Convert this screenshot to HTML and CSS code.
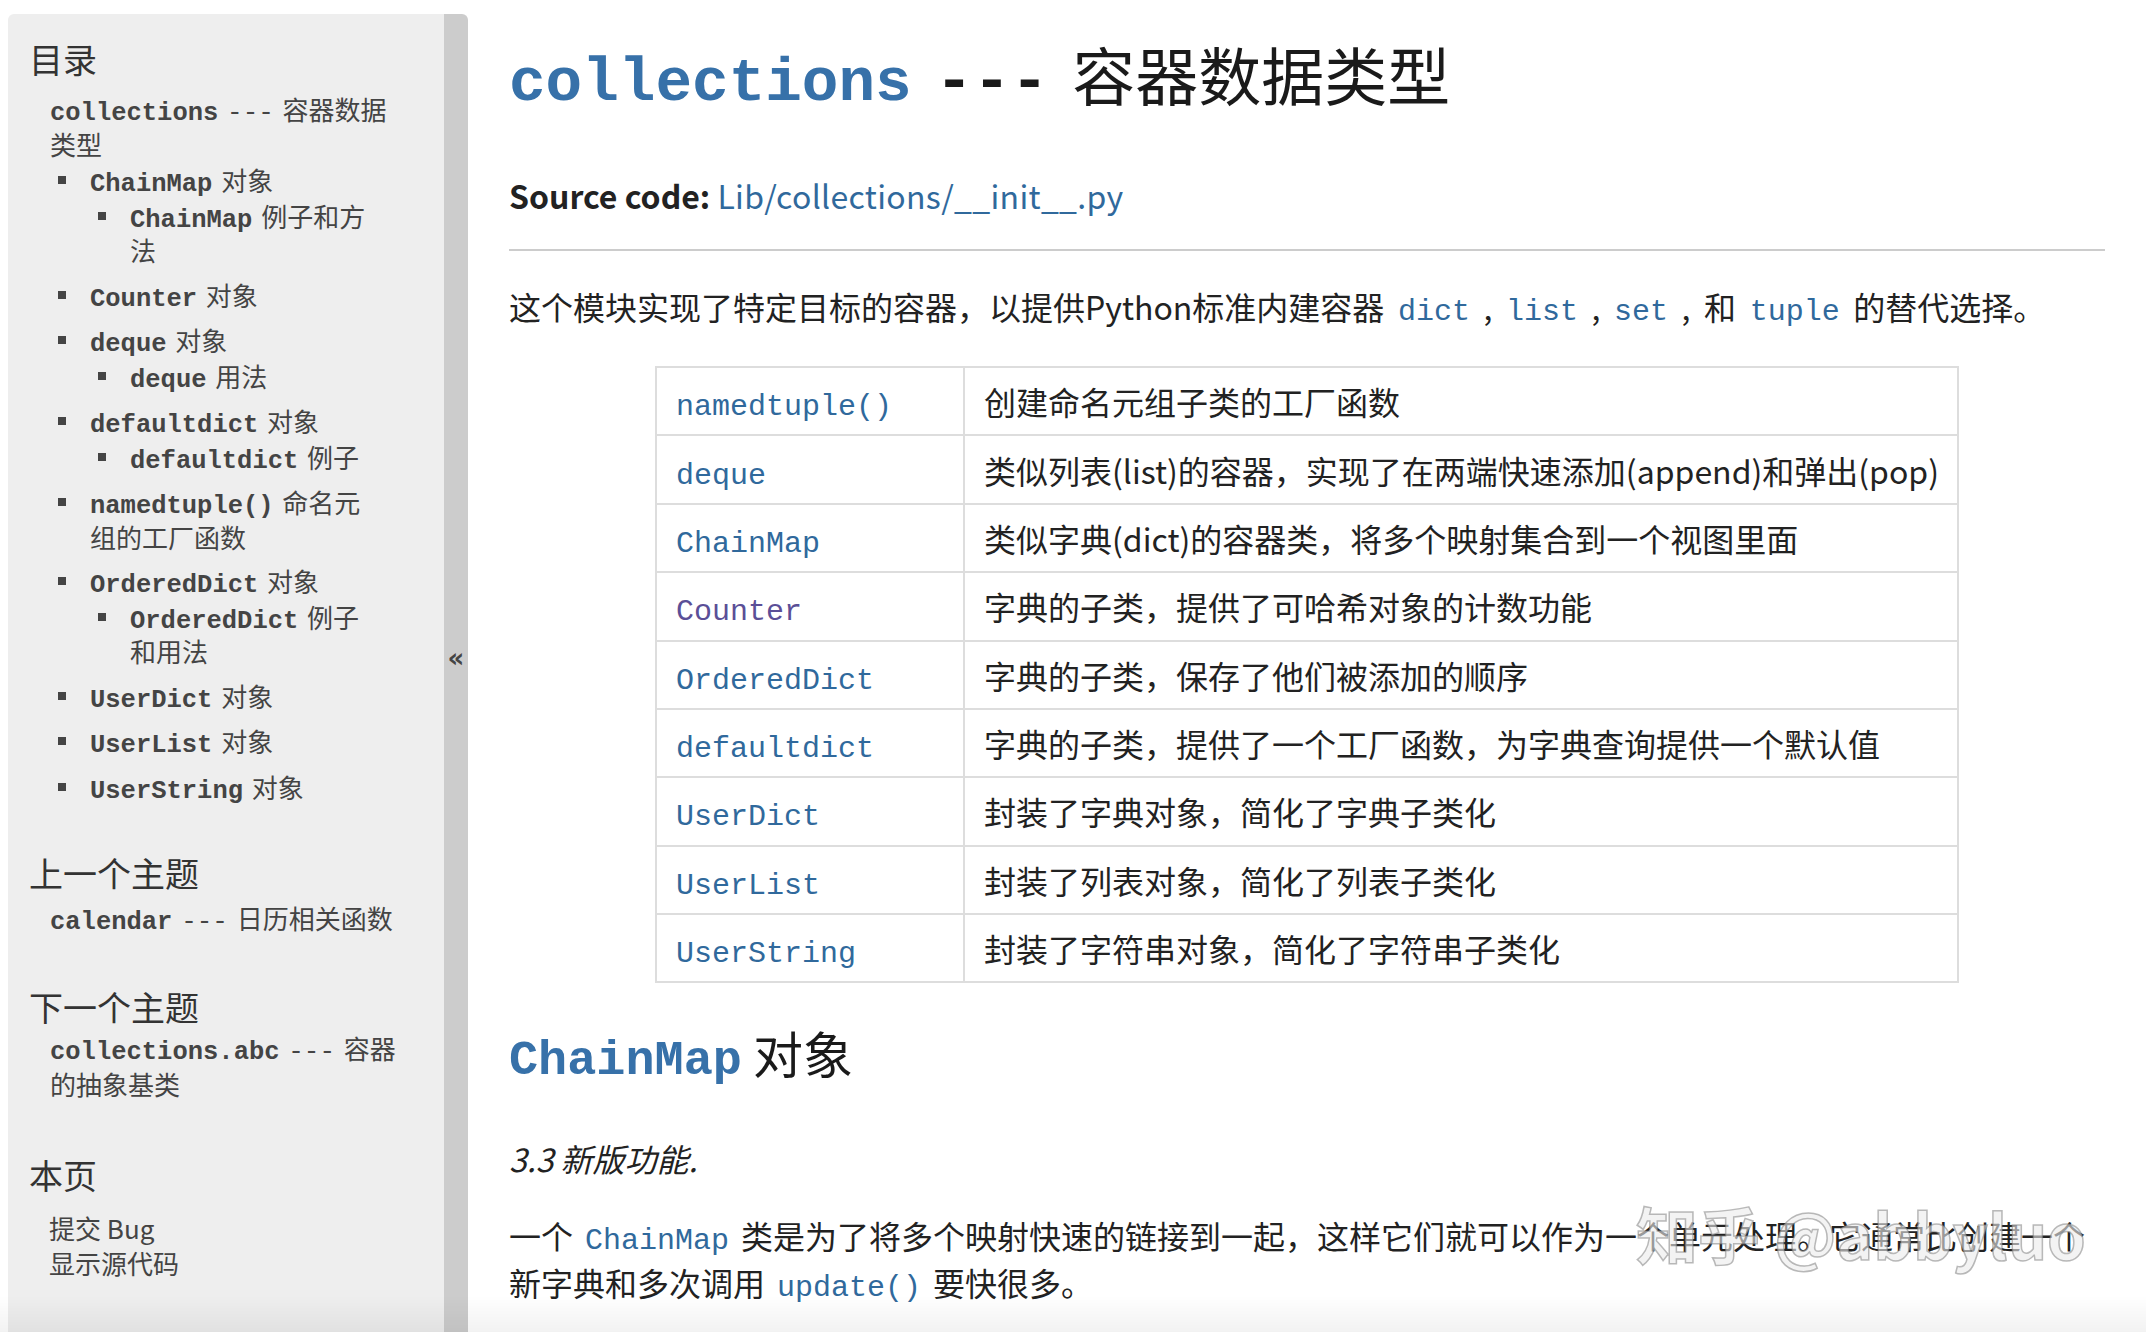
FILE: index.html
```html
<!DOCTYPE html>
<html lang="zh-CN">
<head>
<meta charset="utf-8">
<title>collections --- 容器数据类型</title>
<link rel="stylesheet" href="styles.css">
</head>
<body>
<div class="page">
  <aside class="sidebar">
    <div class="side-body">
      <h3 class="side-h toc-h">目录</h3>
      <ul class="toc">
        <li class="root"><a><code>collections</code> <span class="dash">---</span> 容器数据类型</a>
          <ul class="l1">
            <li class="first"><a><code>ChainMap</code> 对象</a>
              <ul class="l2"><li><a><code>ChainMap</code> 例子和方法</a></li></ul>
            </li>
            <li><a><code>Counter</code> 对象</a></li>
            <li><a><code>deque</code> 对象</a>
              <ul class="l2"><li><a><code>deque</code> 用法</a></li></ul>
            </li>
            <li><a><code>defaultdict</code> 对象</a>
              <ul class="l2"><li><a><code>defaultdict</code> 例子</a></li></ul>
            </li>
            <li><a><code>namedtuple()</code> 命名元组的工厂函数</a></li>
            <li><a><code>OrderedDict</code> 对象</a>
              <ul class="l2"><li><a><code>OrderedDict</code> 例子和用法</a></li></ul>
            </li>
            <li><a><code>UserDict</code> 对象</a></li>
            <li><a><code>UserList</code> 对象</a></li>
            <li><a><code>UserString</code> 对象</a></li>
          </ul>
        </li>
      </ul>
      <h3 class="side-h prev-h">上一个主题</h3>
      <p class="topic"><a><code>calendar</code> <span class="dash">---</span> 日历相关函数</a></p>
      <h3 class="side-h next-h">下一个主题</h3>
      <p class="topic topic-next"><a><code>collections.abc</code> <span class="dash">---</span> 容器的抽象基类</a></p>
      <h3 class="side-h page-h">本页</h3>
      <ul class="this-page">
        <li><a>提交 Bug</a></li>
        <li><a>显示源代码</a></li>
      </ul>
    </div>
    <div class="collapse"><span>«</span></div>
  </aside>

  <main class="content">
    <h1 class="title"><code>collections</code> <span class="dash">---</span> 容器数据类型</h1>
    <p class="source"><strong>Source code:</strong> <a class="link">Lib/collections/__init__.py</a></p>
    <hr class="rule">
    <p class="intro">这个模块实现了特定目标的容器，以提供Python标准内建容器 <code class="x">dict</code> , <code class="x">list</code> , <code class="x">set</code> , 和 <code class="x">tuple</code> 的替代选择。</p>

    <table class="summary">
      <tbody>
        <tr><td class="c1"><code class="x">namedtuple()</code></td><td>创建命名元组子类的工厂函数</td></tr>
        <tr><td class="c1"><code class="x">deque</code></td><td>类似列表(list)的容器，实现了在两端快速添加(append)和弹出(pop)</td></tr>
        <tr><td class="c1"><code class="x">ChainMap</code></td><td>类似字典(dict)的容器类，将多个映射集合到一个视图里面</td></tr>
        <tr><td class="c1"><code class="x visited">Counter</code></td><td>字典的子类，提供了可哈希对象的计数功能</td></tr>
        <tr><td class="c1"><code class="x">OrderedDict</code></td><td>字典的子类，保存了他们被添加的顺序</td></tr>
        <tr><td class="c1"><code class="x">defaultdict</code></td><td>字典的子类，提供了一个工厂函数，为字典查询提供一个默认值</td></tr>
        <tr><td class="c1"><code class="x">UserDict</code></td><td>封装了字典对象，简化了字典子类化</td></tr>
        <tr><td class="c1"><code class="x">UserList</code></td><td>封装了列表对象，简化了列表子类化</td></tr>
        <tr><td class="c1"><code class="x">UserString</code></td><td>封装了字符串对象，简化了字符串子类化</td></tr>
      </tbody>
    </table>

    <h2 class="sub"><code>ChainMap</code> 对象</h2>
    <p class="versionadded">3.3 新版功能.</p>
    <p class="body">一个 <code class="x">ChainMap</code> 类是为了将多个映射快速的链接到一起，这样它们就可以作为一个单元处理。它通常比创建一个新字典和多次调用 <code class="x">update()</code> 要快很多。</p>

    <div class="watermark">知乎 @abbyluo</div>
  </main>
</div>
<div class="bottom-fade"></div>
</body>
</html>
```

FILE: styles.css
```css
* { box-sizing: border-box; }

html, body {
  margin: 0;
  padding: 0;
  height: 100%;
  overflow: hidden;
  background: #ffffff;
}

body {
  font-family: "Noto Sans CJK SC", "Noto Sans", sans-serif;
  color: #222222;
}

code {
  font-family: "Liberation Mono", "DejaVu Sans Mono", monospace;
  line-height: 1;
}

.dash {
  font-family: "Liberation Mono", "DejaVu Sans Mono", monospace;
  line-height: 1;
  word-spacing: normal;
}

.page {
  display: flex;
  align-items: stretch;
  height: 1332px;
}

/* ---------- sidebar ---------- */
.sidebar {
  display: flex;
  margin: 14px 0 0 8px;
  flex: 0 0 460px;
}

.side-body {
  width: 436px;
  background: #eeeeee;
  border-top-left-radius: 6px;
  padding: 23px 32px 0 21px;
  color: #444444;
  word-spacing: 0.18em;
}

.collapse {
  width: 24px;
  background: #cccccc;
  border-top-right-radius: 6px;
  display: flex;
  align-items: flex-start;
  justify-content: center;
  padding-top: 631px;
  color: #444444;
  font-family: "DejaVu Sans", sans-serif;
  font-size: 26px;
  font-weight: bold;
}

.collapse span { line-height: 1; }

.side-h {
  margin: 0;
  font-size: 34px;
  line-height: 44px;
  font-weight: normal;
  color: #333333;
  word-spacing: normal;
}

.side-body code {
  font-weight: bold;
  font-size: 25.5px;
  word-spacing: normal;
}

.side-body .dash { font-size: 26px; }

.side-body a { color: #444444; text-decoration: none; }

.toc {
  list-style: none;
  margin: 11px 18px 0 0;
  padding: 0 0 0 21px;
  font-size: 26px;
  line-height: 33.6px;
}

.toc ul {
  list-style: none;
  margin: 0;
  padding: 0 0 0 40px;
}

.toc .l1 { margin-right: 10px; }

.toc .l1 > li { margin-top: 11px; position: relative; }
.toc .l1 > li.first { margin-top: 3px; }
.toc .l2 > li { margin-top: 1px; position: relative; }

.toc .l1 > li::before,
.toc .l2 > li::before {
  content: "";
  position: absolute;
  left: -32px;
  top: 13px;
  width: 8px;
  height: 8px;
  background: #444444;
}

.prev-h { margin-top: 47px; }
.next-h { margin-top: 49px; }
.page-h { margin-top: 51px; }

.topic {
  margin: 5px 0 0 21px;
  font-size: 26px;
  line-height: 36px;
}

.topic-next { margin-top: 1px; }

.this-page {
  list-style: none;
  margin: 13px 0 0 0;
  padding: 0 0 0 20px;
  font-size: 26px;
  line-height: 35px;
  word-spacing: normal;
}

/* ---------- main content ---------- */
.content {
  position: relative;
  flex: 1 1 auto;
  padding: 0 41px 0 41px;
  min-width: 0;
}

.title {
  margin: 33px 0 0 0;
  font-size: 63px;
  line-height: 80px;
  font-weight: normal;
  color: #1a1a1a;
  word-spacing: 0.15em;
}

.title code {
  font-size: 61px;
  font-weight: bold;
  color: #3771a9;
  word-spacing: normal;
}

.title .dash { font-size: 63px; font-weight: bold; color: #1a1a1a; }

.source {
  margin: 57px 0 0 0;
  font-size: 32px;
  line-height: 46px;
}

.source strong { font-weight: bold; color: #222222; }

.link { color: #30699c; text-decoration: none; letter-spacing: 0.01em; }

.rule {
  margin: 31px 0 0 0;
  border: 0;
  border-top: 2px solid #cccccc;
  height: 0;
}

.intro {
  margin: 32px 0 0 0;
  font-size: 32px;
  line-height: 46px;
  word-spacing: 0.2em;
}

code.x {
  font-size: 30px;
  color: #30699c;
  word-spacing: normal;
}

code.visited { color: #5b4f97; }

.summary {
  margin: 37px auto 0 auto;
  width: 1304px;
  border-collapse: collapse;
  font-size: 32px;
  line-height: 46px;
}

.summary td {
  border: 2px solid #dddddd;
  padding: 10.2px 18px 10.2px 19px;
  vertical-align: middle;
  white-space: nowrap;
}

.summary td.c1 { width: 311px; }

.sub {
  margin: 37px 0 0 0;
  font-size: 50px;
  line-height: 64px;
  font-weight: normal;
  color: #1a1a1a;
}

.sub code {
  font-size: 48.5px;
  font-weight: bold;
  color: #3771a9;
}

.versionadded {
  margin: 48px 0 0 0;
  font-size: 32px;
  line-height: 46px;
  font-style: italic;
  color: #222222;
}

.body {
  margin: 31px 0 0 0;
  font-size: 32px;
  line-height: 47px;
  word-spacing: 0.15em;
}

.watermark {
  position: absolute;
  left: 1168px;
  top: 1196px;
  font-size: 62px;
  line-height: 74px;
  font-weight: bold;
  color: rgba(235, 235, 235, 0.6);
  -webkit-text-stroke: 1.5px rgba(120, 120, 120, 0.5);
  white-space: nowrap;
  pointer-events: none;
}

.bottom-fade {
  position: fixed;
  left: 0;
  right: 0;
  bottom: 0;
  height: 36px;
  background: linear-gradient(rgba(0, 0, 0, 0), rgba(0, 0, 0, 0.05));
  pointer-events: none;
}
```
